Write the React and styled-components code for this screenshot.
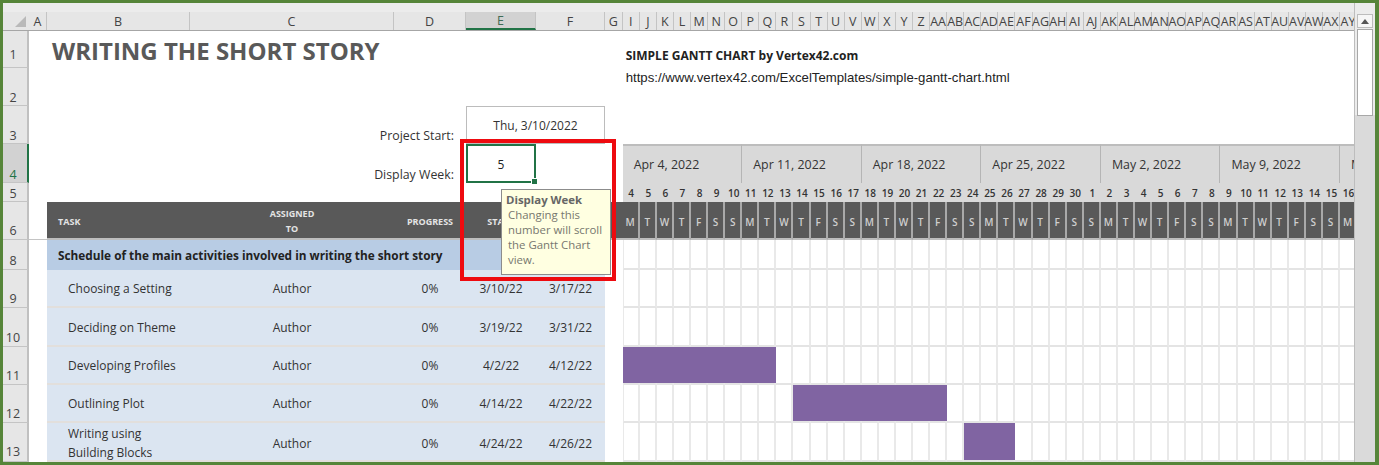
import React from "react";
import styled, { createGlobalStyle } from "styled-components";

const Global = createGlobalStyle`
  html, body { margin: 0; padding: 0; background: #fff; }
  body { font-family: "Open Sans", "Liberation Sans", sans-serif; }
`;

const UI = `"Open Sans", "Liberation Sans", sans-serif`;
const DAY_W = 17.08;

const Window = styled.div`
  position: relative;
  box-sizing: border-box;
  width: 1379px;
  height: 465px;
  border: solid #568539;
  border-width: 3px 4px 3px 3px;
  display: flex;
  overflow: hidden;
  background: #fff;
`;
const Main = styled.div`
  width: 1351px;
  display: flex;
  flex-direction: column;
  flex: none;
`;
const TopStrip = styled.div`
  height: 9px;
  background: #ececec;
`;
const ColumnBar = styled.div`
  display: flex;
  height: 18px;
  background: #e6e6e6;
  border-bottom: 1px solid #a6a6a6;
  box-sizing: content-box;
  flex: none;
  overflow: hidden;
`;
const Corner = styled.div`
  width: 26px;
  flex: none;
  display: flex;
  justify-content: flex-end;
  align-items: flex-end;
  padding: 0 3px 3px 0;
  box-sizing: border-box;
  svg { display: block; }
`;
const ColHead = styled.div`
  width: ${(p) => p.$w}px;
  flex: none;
  box-sizing: border-box;
  display: flex;
  align-items: center;
  justify-content: center;
  white-space: nowrap;
  font: 12.5px ${UI};
  color: ${(p) => (p.$active ? "#3f6b55" : "#444")};
  background: ${(p) => (p.$active ? "#d2d2d2" : "transparent")};
  border-right: 1px solid #c4c4c4;
  border-bottom: ${(p) => (p.$active ? "2px solid #217346" : "none")};
`;
const Body = styled.div`
  display: flex;
  flex: 1;
  min-height: 0;
`;
const RowBar = styled.div`
  width: 26px;
  flex: none;
  display: flex;
  flex-direction: column;
  background: #e6e6e6;
  box-sizing: border-box;
`;
const RowHead = styled.div`
  height: ${(p) => p.$h}px;
  flex: none;
  box-sizing: border-box;
  display: flex;
  align-items: flex-end;
  justify-content: center;
  padding: 0 4px ${(p) => p.$pb}px 0;
  font: 12.5px/14px ${UI};
  color: ${(p) => (p.$active ? "#217346" : "#444")};
  background: ${(p) => (p.$active ? "#d2d2d2" : "transparent")};
  border-bottom: 1px solid #c4c4c4;
  border-right: ${(p) => (p.$active ? "2px solid #217346" : "2px solid #c0c0c0")};
`;
const Sheet = styled.div`
  flex: 1;
  min-width: 0;
  overflow: hidden;
  display: grid;
  grid-template-columns: 18px 143px 204px 72px 70px 69px 17.7px repeat(43, ${DAY_W}px);
  grid-template-rows: 37px 38px 38px 39px 19px 38px 30px 38px 39px 38px 38px 39px;
  background: #fff;
`;
const Title = styled.h1`
  grid-column: 2 / 5;
  grid-row: 1;
  margin: 0;
  padding: 5px 0 0 5px;
  font: 700 24px/30px ${UI};
  color: #595959;
  white-space: nowrap;
`;
const Credit = styled.div`
  grid-column: 8 / 40;
  grid-row: 1;
  align-self: end;
  padding: 0 0 4px 3px;
  font: 700 12px/16px ${UI};
  color: #222;
  white-space: nowrap;
`;
const Link = styled.div`
  grid-column: 8 / 50;
  grid-row: 2;
  padding: 2px 0 0 3px;
  font: 13.2px/16px "Liberation Sans", Arial, sans-serif;
  color: #222;
  white-space: nowrap;
`;
const FieldLabel = styled.div`
  grid-column: 3 / 5;
  grid-row: ${(p) => p.$row};
  align-self: end;
  justify-self: end;
  padding: 0 12px 0 0;
  font: 12.35px/16px ${UI};
  color: #333;
`;
const DateBox = styled.div`
  grid-column: 5 / 7;
  grid-row: 3;
  box-sizing: border-box;
  border: 1px solid #bcbcbc;
  padding-top: 1px;
  display: flex;
  align-items: center;
  justify-content: center;
  font: 12px ${UI};
  color: #333;
`;
const WeekInput = styled.div`
  position: relative;
  grid-column: 5;
  grid-row: 4;
  box-sizing: border-box;
  border: 2px solid #217346;
  padding-top: 1px;
  display: flex;
  align-items: center;
  justify-content: center;
  font: 12px ${UI};
  color: #222;
`;
const FillHandle = styled.span`
  position: absolute;
  right: -4px;
  bottom: -4px;
  width: 5px;
  height: 5px;
  background: #217346;
  border: 1px solid #fff;
`;
const WeekHead = styled.div`
  grid-column: ${(p) => p.$col} / span 7;
  grid-row: 4;
  box-sizing: border-box;
  background: #d9d9d9;
  border-top: 2px solid #bdbdbd;
  border-right: 1px solid #b5b5b5;
  display: flex;
  align-items: center;
  padding-left: 11px;
  font: 12.4px ${UI};
  color: #333;
  white-space: nowrap;
  overflow: hidden;
`;
const DayNum = styled.div`
  grid-column: ${(p) => p.$col};
  grid-row: 5;
  background: #d9d9d9;
  display: flex;
  align-items: center;
  justify-content: center;
  font: 600 10px ${UI};
  color: #333;
  white-space: nowrap;
`;
const DayLetter = styled.div`
  grid-column: ${(p) => p.$col};
  grid-row: 6;
  box-sizing: border-box;
  background: #595959;
  border-right: 2px solid #a9a9a9;
  border-bottom: 2px solid #bdbdbd;
  padding-top: 3px;
  display: flex;
  align-items: center;
  justify-content: center;
  font: 600 10px ${UI};
  color: #cfcfcf;
`;
const TableHead = styled.div`
  grid-column: 2 / 8;
  grid-row: 6;
  display: grid;
  grid-template-columns: subgrid;
  background: #595959;
  border-bottom: 2px solid #bdbdbd;
  color: #e4e4e4;
  font: 700 9px/15px ${UI};
`;
const HeadCell = styled.div`
  display: flex;
  align-items: center;
  justify-content: ${(p) => (p.$left ? "flex-start" : "center")};
  text-align: center;
  padding-top: 2px;
  padding-left: ${(p) => (p.$left ? "11px" : "0")};
`;
const FreezeLine = styled.div`
  grid-column: 1;
  grid-row: 6;
  align-self: end;
  height: 1px;
  background: #c4c4c4;
`;
const SectionRow = styled.div`
  grid-column: 2 / 7;
  grid-row: 7;
  background: #b8cce4;
  display: flex;
  align-items: center;
  padding-left: 11px;
  font: 700 11.8px ${UI};
  color: #222;
  white-space: nowrap;
`;
const TaskRow = styled.div`
  grid-column: 2 / 7;
  grid-row: ${(p) => p.$row};
  display: grid;
  grid-template-columns: subgrid;
  background: #dbe5f1;
  border-bottom: 2px solid #e2dfdc;
  font: 12px/19px ${UI};
  color: #333;
`;
const TaskName = styled.div`
  display: flex;
  align-items: center;
  padding: 1px 0 0 21px;
`;
const TaskValue = styled.div`
  display: flex;
  align-items: center;
  justify-content: center;
  padding-top: 1px;
`;
const GridCell = styled.div`
  grid-column: ${(p) => p.$col};
  grid-row: ${(p) => p.$row};
  box-sizing: border-box;
  border-right: 2px solid #e9e9e9;
  border-bottom: 2px solid #e4e4e4;
  border-left: ${(p) => (p.$first ? "1px solid #e9e9e9" : "none")};
`;
const Bar = styled.div`
  grid-column: ${(p) => p.$col} / span ${(p) => p.$span};
  grid-row: ${(p) => p.$row};
  background: #8064a2;
  margin-bottom: 2px;
  z-index: 1;
`;
const Scrollbar = styled.div`
  flex: 1;
  background: linear-gradient(#ececec 112px, #dadada 112px);
  display: flex;
  flex-direction: column;
  align-items: center;
  padding-top: 11px;
  gap: 1px;
  box-sizing: border-box;
  border-left: 1px solid #bdbdbd;
`;
const ScrollButton = styled.div`
  width: 16px;
  height: 14px;
  box-sizing: border-box;
  background: #f6f6f6;
  border: 1px solid #bcbcbc;
  display: flex;
  align-items: center;
  justify-content: center;
`;
const ScrollThumb = styled.div`
  width: 16px;
  height: 87px;
  box-sizing: border-box;
  background: #fff;
  border: 1px solid #a8a8a8;
`;
const Tooltip = styled.div`
  position: absolute;
  left: 498px;
  top: 186px;
  width: 110px;
  height: 86px;
  box-sizing: border-box;
  background: #ffffe1;
  border: 1px solid #8c8c8c;
  padding: 2px 4px 0 4px;
  font: 11.4px/15px ${UI};
  color: #77776f;
  white-space: nowrap;
  z-index: 3;
`;
const TipTitle = styled.div`
  font-weight: 700;
  color: #666;
`;
const TipBody = styled.div`
  padding-left: 2px;
`;
const RedFrame = styled.div`
  position: absolute;
  left: 457px;
  top: 136px;
  width: 156px;
  height: 142px;
  box-sizing: border-box;
  border: 4px solid #ee0a0f;
  z-index: 4;
  pointer-events: none;
`;

const colLabels = ["A", "B", "C", "D", "E", "F", "G", "I", "J", "K", "L", "M", "N", "O", "P", "Q", "R", "S", "T", "U", "V", "W", "X", "Y", "Z",
  "AA", "AB", "AC", "AD", "AE", "AF", "AG", "AH", "AI", "AJ", "AK", "AL", "AM", "AN", "AO", "AP", "AQ", "AR", "AS", "AT", "AU", "AV", "AW", "AX", "AY"];
const colWidths = [18, 143, 204, 72, 70, 69, 17.7];
const rowsHead = [
  ["1", 37, 5], ["2", 38, 0], ["3", 38, 0], ["4", 39, 0], ["5", 19, 0], ["6", 38, 1],
  ["8", 30, 1], ["9", 38, 1], ["10", 39, 1], ["11", 38, 1], ["12", 38, 1], ["13", 39, 2],
];
const weeks = ["Apr 4, 2022", "Apr 11, 2022", "Apr 18, 2022", "Apr 25, 2022", "May 2, 2022", "May 9, 2022", "May 16, 2022"];
const dayNums = [4, 5, 6, 7, 8, 9, 10, 11, 12, 13, 14, 15, 16, 17, 18, 19, 20, 21, 22, 23, 24, 25, 26, 27, 28, 29, 30, 1, 2, 3, 4, 5, 6, 7, 8, 9, 10, 11, 12, 13, 14, 15, 16];
const letters = ["M", "T", "W", "T", "F", "S", "S"];
const tasks = [
  [["Choosing a Setting"], "3/10/22", "3/17/22"],
  [["Deciding on Theme"], "3/19/22", "3/31/22"],
  [["Developing Profiles"], "4/2/22", "4/12/22"],
  [["Outlining Plot"], "4/14/22", "4/22/22"],
  [["Writing using", "Building Blocks"], "4/24/22", "4/26/22"],
];
const FIRST = 8;
const bars = [
  { row: 10, start: 0, span: 9 },
  { row: 11, start: 10, span: 9 },
  { row: 12, start: 20, span: 3 },
];

export default function App() {
  return (
    <Window>
      <Global />
      <Main>
        <TopStrip />
        <ColumnBar>
          <Corner>
            <svg width="11" height="11" viewBox="0 0 11 11"><path d="M11 0V11H0Z" fill="#b9b9b9" /></svg>
          </Corner>
          {colLabels.map((c, i) => (
            <ColHead key={c} $w={colWidths[i] ?? DAY_W} $active={c === "E"}>{c}</ColHead>
          ))}
        </ColumnBar>
        <Body>
          <RowBar>
            {rowsHead.map(([n, h, pb]) => (
              <RowHead key={n} $h={h} $pb={pb} $active={n === "4"}>{n}</RowHead>
            ))}
          </RowBar>
          <Sheet>
            <Title>WRITING THE SHORT STORY</Title>
            <Credit>SIMPLE GANTT CHART by Vertex42.com</Credit>
            <Link>https://www.vertex42.com/ExcelTemplates/simple-gantt-chart.html</Link>
            <FieldLabel $row={3}>Project Start:</FieldLabel>
            <DateBox>Thu, 3/10/2022</DateBox>
            <FieldLabel $row={4}>Display Week:</FieldLabel>
            <WeekInput>5<FillHandle /></WeekInput>

            {weeks.map((w, i) => (
              <WeekHead key={w} $col={FIRST + i * 7}>{w}</WeekHead>
            ))}
            {dayNums.map((d, i) => (
              <DayNum key={i} $col={FIRST + i}>{d}</DayNum>
            ))}

            <FreezeLine />
            <TableHead>
              <HeadCell $left>TASK</HeadCell>
              <HeadCell>ASSIGNED<br />TO</HeadCell>
              <HeadCell>PROGRESS</HeadCell>
              <HeadCell>START</HeadCell>
              <HeadCell>END</HeadCell>
            </TableHead>
            {dayNums.map((_, i) => (
              <DayLetter key={i} $col={FIRST + i}>{letters[i % 7]}</DayLetter>
            ))}

            <SectionRow>Schedule of the main activities involved in writing the short story</SectionRow>
            {tasks.map(([name, start, end], i) => (
              <TaskRow key={name[0]} $row={8 + i}>
                <TaskName><div>{name.map((l) => <div key={l}>{l}</div>)}</div></TaskName>
                <TaskValue>Author</TaskValue>
                <TaskValue>0%</TaskValue>
                <TaskValue>{start}</TaskValue>
                <TaskValue>{end}</TaskValue>
              </TaskRow>
            ))}

            {[7, 8, 9, 10, 11, 12].flatMap((row) =>
              dayNums.map((_, i) => <GridCell key={`${row}-${i}`} $row={row} $col={FIRST + i} $first={i === 0} />)
            )}
            {bars.map((b) => (
              <Bar key={b.row} $row={b.row} $col={FIRST + b.start} $span={b.span} />
            ))}
          </Sheet>
        </Body>
      </Main>
      <Scrollbar>
        <ScrollButton>
          <svg width="8" height="5" viewBox="0 0 8 5"><path d="M4 0L8 5H0Z" fill="#555" /></svg>
        </ScrollButton>
        <ScrollThumb />
      </Scrollbar>
      <Tooltip>
        <TipTitle>Display Week</TipTitle>
        <TipBody>Changing this<br />number will scroll<br />the Gantt Chart<br />view.</TipBody>
      </Tooltip>
      <RedFrame />
    </Window>
  );
}
